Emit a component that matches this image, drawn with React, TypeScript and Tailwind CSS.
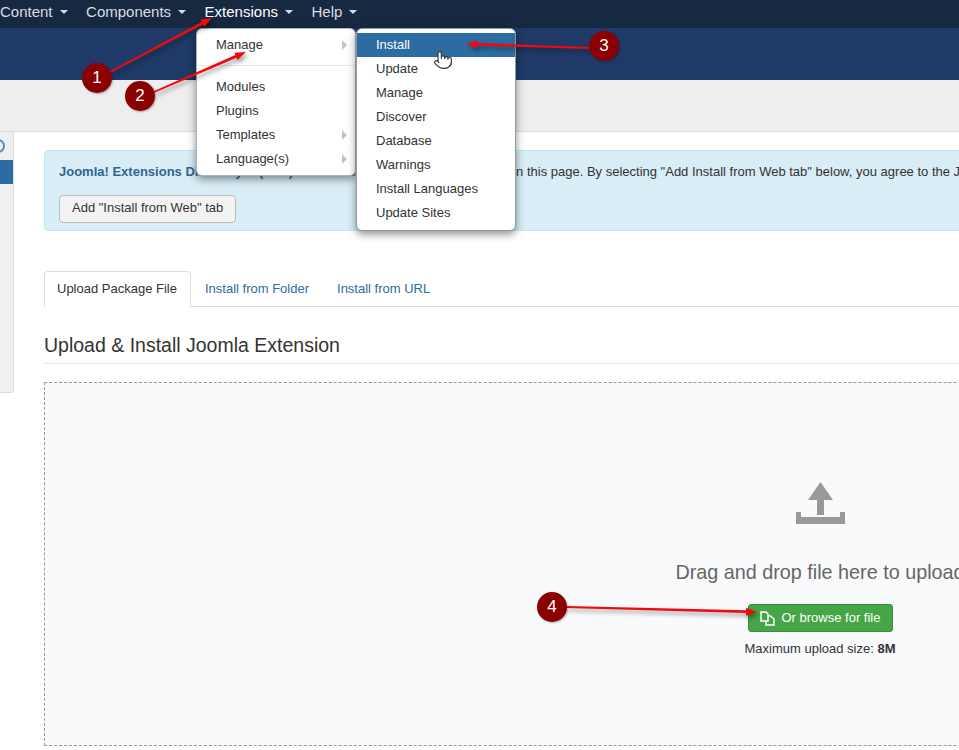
import { Pointer } from "lucide-react";

const caret = "ml-[7px] inline-block h-0 w-0 border-x-[4px] border-t-[4px] border-x-transparent border-t-[#d9dde3] align-middle";

function NavItem({ label, className = "" }: { label: string; className?: string }) {
  return (
    <span className={`flex items-center text-[15px] ${className}`}>
      {label}
      <span className={caret} />
    </span>
  );
}

function MenuItem({ label, active, sub }: { label: string; active?: boolean; sub?: boolean }) {
  return (
    <div className={`flex h-6 items-center justify-between pl-[19px] pr-2 text-[13px] ${active ? "bg-[#2d6ca2] text-white" : "text-[#333]"}`}>
      {label}
      {sub && <span className="h-0 w-0 border-y-[5px] border-l-[5px] border-y-transparent border-l-[#c4c4c4]" />}
    </div>
  );
}

// red annotation arrow from a numbered badge to its target
function Arrow({ x1, y1, x2, y2 }: { x1: number; y1: number; x2: number; y2: number }) {
  const a = Math.atan2(y2 - y1, x2 - x1);
  const len = 11;
  const bx = x2 - Math.cos(a) * len;
  const by = y2 - Math.sin(a) * len;
  const nx = -Math.sin(a);
  const ny = Math.cos(a);
  const shape = [
    `${x2},${y2}`,
    `${bx + nx * 4},${by + ny * 4}`,
    `${bx + nx * 1.4},${by + ny * 1.4}`,
    `${x1 + nx * 0.9},${y1 + ny * 0.9}`,
    `${x1 - nx * 0.9},${y1 - ny * 0.9}`,
    `${bx - nx * 1.4},${by - ny * 1.4}`,
    `${bx - nx * 4},${by - ny * 4}`,
  ].join(" ");
  return <polygon points={shape} fill="#f00a0a" style={{ filter: "drop-shadow(2px 3px 2px rgba(0,0,0,0.4))" }} />;
}

function Badge({ n, x, y }: { n: number; x: number; y: number }) {
  return (
    <div
      className="absolute flex h-[30px] w-[30px] items-center justify-center rounded-full bg-[#8b0000] text-[17px] text-white shadow-[1px_1px_2px_rgba(0,0,0,0.3)]"
      style={{ left: x - 15, top: y - 15 }}
    >
      {n}
    </div>
  );
}

export default function App() {
  return (
    <div className="relative h-[750px] w-[959px] overflow-hidden bg-white font-['Liberation_Sans',Arial,sans-serif] text-[13px] text-[#333]">
      {/* top nav */}
      <div className="flex h-7 items-center bg-[#172941] pb-[4px] text-[#d9dde3]">
        <NavItem label="Content" />
        <NavItem label="Components" className="ml-[18.5px]" />
        <NavItem label="Extensions" className="ml-[18.5px] text-white" />
        <NavItem label="Help" className="ml-[18.5px]" />
      </div>
      <div className="h-[52px] bg-[#1f3a68]" />
      <div className="h-[52px] border-b border-[#dcdcdc] bg-[#eeeeee]" />

      <div className="flex">
        {/* collapsed sidebar */}
        <div className="h-[261px] w-[14px] shrink-0 overflow-hidden rounded-br-[3px] border-r border-b border-[#dcdcdc] bg-[#f0f0f0] pt-[7px]">
          <div className="-ml-[9px] h-[14px] w-[14px] rounded-full border-2 border-[#5b8fc4]" />
          <div className="mt-[7px] h-6 bg-[#2d6ca2]" />
        </div>

        <div className="w-[1552px] shrink-0 pl-[30px] pt-[18px]">
          {/* notice */}
          <div className="h-[81px] w-[1552px] rounded-[4px] border border-[#bce8f1] bg-[#d9edf7] pl-[14px] pt-[13px]">
            <p className="whitespace-nowrap text-[13px] leading-[16px]">
              <b className="text-[#31658a]">Joomla! Extensions Directory™ (JED) now available</b> with Install from Web on this page. By selecting "Add Install from Web tab" below, you agree to the JED Terms of Service and all applicable third party license terms.
            </p>
            <button className="mt-[15px] h-7 rounded-[4px] border border-[#bbb] bg-[#f3f3f3] px-[12px] pb-[2px] text-[13px] text-[#333]">
              Add "Install from Web" tab
            </button>
          </div>

          {/* tabs */}
          <div className="mt-[40px] flex h-9 border-b border-[#ddd] text-[13px]">
            <div className="flex h-9 items-center rounded-t-[4px] border border-b-0 border-[#ddd] bg-white pb-[2px] pl-3 pr-[13px]">Upload Package File</div>
            <div className="flex items-center px-[14px] text-[#2d6ca2]">Install from Folder</div>
            <div className="flex items-center px-[14px] text-[#2d6ca2]">Install from URL</div>
          </div>

          <h1 className="mt-[24px] border-b border-[#e5e5e5] pb-[4px] text-[19.5px] leading-[28px] text-[#333]">
            Upload &amp; Install Joomla Extension
          </h1>

          {/* drop zone */}
          <div className="mt-[18px] flex h-[364px] w-[1552px] flex-col items-center border border-dashed border-[#999] bg-[#f9fafc] pt-[99px]">
            <svg className="ml-[2px]" width="50" height="43" viewBox="0 0 50 43" fill="#999">
              <path d="M24.5 0 37 18H28V33H21V18H12Z" />
              <path d="M0 30H5V35H44V30H49V42H0Z" />
            </svg>
            <p className="mt-[35px] text-[19.8px] leading-[24px] text-[#666]">Drag and drop file here to upload</p>
            <button className="mt-[20px] flex h-7 w-[145px] items-center justify-center gap-[7px] rounded-[3px] border border-[#3d8b3d] bg-[#46a546] text-[13px] text-white">
              <svg width="15" height="15" viewBox="0 0 15 15" fill="none" stroke="#fff" strokeWidth="1.5">
                <path d="M1 1H6L8 3V10H1Z" />
                <path d="M8 5H10.5L14 8V14H6V10" />
              </svg>
              Or browse for file
            </button>
            <p className="mt-[9px] text-[13px] leading-[16px]">
              Maximum upload size: <b>8M</b>
            </p>
          </div>
        </div>
      </div>

      {/* Extensions dropdown */}
      <div className="absolute left-[196px] top-[28px] h-[148px] w-[160px] rounded-[6px] border border-[#aab2bb] bg-white pt-[4px] shadow-[0_3px_9px_rgba(0,0,0,0.45)]">
        <MenuItem label="Manage" sub />
        <div className="mb-[9px] mt-[8px] h-px bg-[#e5e5e5]" />
        <MenuItem label="Modules" />
        <MenuItem label="Plugins" />
        <MenuItem label="Templates" sub />
        <MenuItem label="Language(s)" sub />
      </div>
      <div className="absolute left-[356px] top-[28px] h-[203px] w-[160px] overflow-hidden rounded-[6px] border border-[#8f9aa5] bg-white pt-1 shadow-[0_3px_9px_rgba(0,0,0,0.45)]">
        <MenuItem label="Install" active />
        <MenuItem label="Update" />
        <MenuItem label="Manage" />
        <MenuItem label="Discover" />
        <MenuItem label="Database" />
        <MenuItem label="Warnings" />
        <MenuItem label="Install Languages" />
        <MenuItem label="Update Sites" />
      </div>

      {/* annotations */}
      <svg className="absolute left-0 top-0" width="959" height="750">
        <Arrow x1={110} y1={72} x2={212} y2={18} />
        <Arrow x1={154} y1={92} x2={246} y2={52} />
        <Arrow x1={590} y1={48} x2={466} y2={44} />
        <Arrow x1={566} y1={607} x2={757} y2={612} />
      </svg>
      <Badge n={1} x={97} y={78} />
      <Badge n={2} x={140} y={96} />
      <Badge n={3} x={604} y={46} />
      <Badge n={4} x={552} y={607} />
      <Pointer className="absolute left-[433px] top-[48px] h-[24px] w-[20px] fill-white text-[#333]" strokeWidth={1.4} />
    </div>
  );
}
